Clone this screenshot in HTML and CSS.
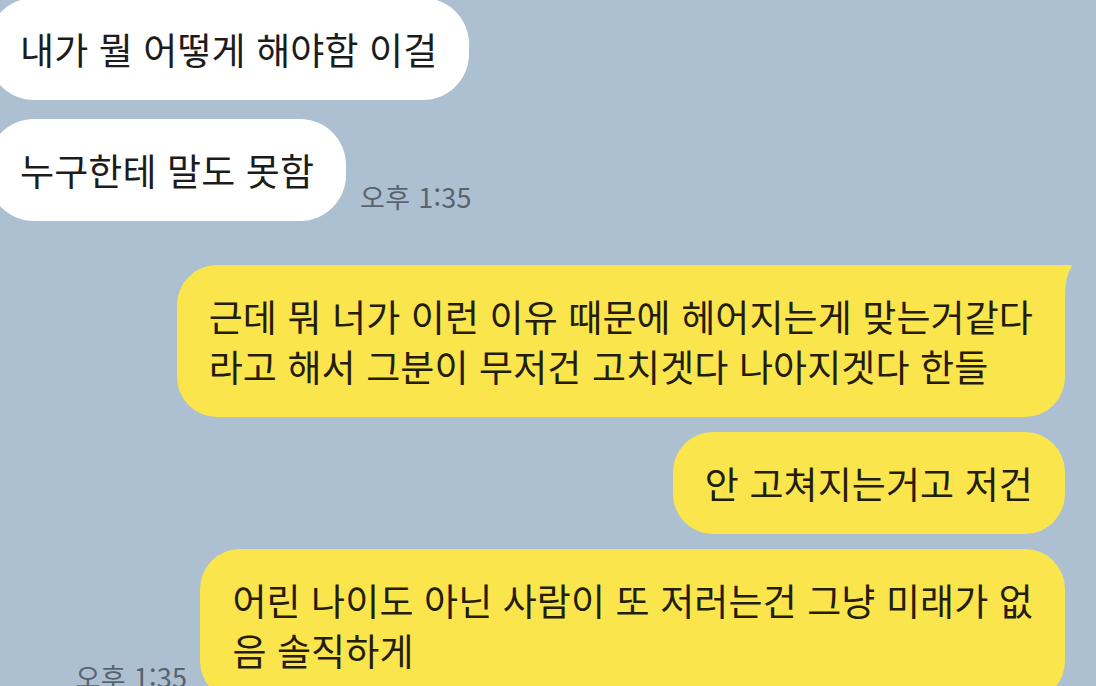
FILE: index.html
```html
<!DOCTYPE html>
<html lang="ko">
<head>
  <meta charset="UTF-8" />
  <title>채팅</title>
  <link rel="stylesheet" href="styles.css">
</head>
<body>

  <div id="chat">
    <div class="group other">
      <div class="row">
        <div class="bubble white">내가 뭘 어떻게 해야함 이걸</div>
      </div>
      <div class="row">
        <div class="bubble white">누구한테 말도 못함</div>
        <span class="time">오후 1:35</span>
      </div>
    </div>

    <div class="group mine">
      <div class="row">
        <div class="bubble yellow first">
          근데 뭐 너가 이런 이유 때문에 헤어지는게 맞는거같다<br>라고 해서 그분이 무저건 고치겟다 나아지겟다 한들
          <svg class="tail" width="32" height="32" viewBox="0 0 32 32">
            <path d="M0 0 H30 Q33 0 31 3 Q25 12 25 32 H0 Z" />
          </svg>
        </div>
      </div>
      <div class="row">
        <div class="bubble yellow">안 고쳐지는거고 저건</div>
      </div>
      <div class="row">
        <span class="time">오후 1:35</span>
        <div class="bubble yellow">어린 나이도 아닌 사람이 또 저러는건 그냥 미래가 없<br>음 솔직하게</div>
      </div>
    </div>
  </div>

</body>
</html>
```

FILE: styles.css
```css
body {
  font-family: 'Noto Sans CJK KR', 'Noto Sans', sans-serif;
  background-color: #adc0d1;
  margin: 0;
  padding: 0;
  width: 1096px;
  height: 686px;
  overflow: hidden;
}

#chat {
  display: flex;
  flex-direction: column;
  margin-top: -2px;
}

.group {
  display: flex;
  flex-direction: column;
}

.other {
  gap: 19px;
  margin-left: -12px;
}

.mine {
  gap: 15px;
  margin-top: 44px;
  padding-right: 31px;
}

.row {
  display: flex;
  align-items: flex-end;
  gap: 14px;
}

.mine .row {
  justify-content: flex-end;
  gap: 13px;
}

.bubble {
  position: relative;
  font-size: 37px;
  letter-spacing: 0.1px;
  line-height: 50px;
  padding: 26px 32px 26px 32px;
  border-radius: 46px;
  white-space: nowrap;
}

.white {
  background-color: #ffffff;
  color: #1c1c1c;
}

.yellow {
  background-color: #fae54d;
  color: #241d0a;
  border-radius: 40px;
}

.first {
  border-top-right-radius: 0;
}

.tail {
  position: absolute;
  top: 0;
  right: -7px;
  fill: #fae54d;
}

.time {
  font-size: 27px;
  letter-spacing: 0.3px;
  color: #58636f;
  padding-bottom: 5px;
  white-space: nowrap;
}
```
